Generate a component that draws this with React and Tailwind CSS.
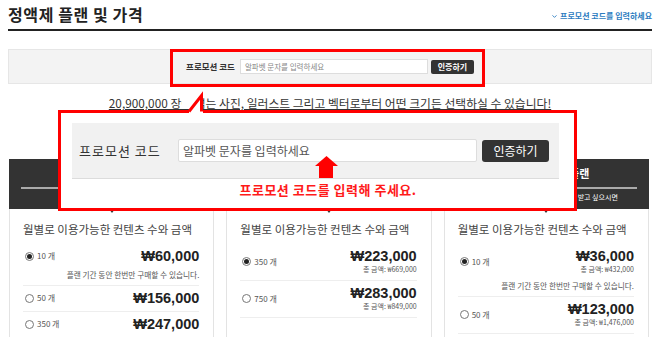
import { ChevronDown } from 'lucide-react';

const plans = [
  {
    title: '이미지 팩 플랜',
    sub: '필요할 때만 다운받고 싶으시면',
    rows: [
      { label: '10 개', price: '₩60,000', note: '플랜 기간 동안 한번만 구매할 수 있습니다.', checked: true },
      { label: '50 개', price: '₩156,000' },
      { label: '350 개', price: '₩247,000' },
    ],
  },
  {
    title: '월간 정기구독 플랜',
    sub: '매월 정기적으로 이미지를 다운로드 받고 싶으시면',
    rows: [
      { label: '350 개', price: '₩223,000', total: '총 금액: ₩669,000', checked: true },
      { label: '750 개', price: '₩283,000', total: '총 금액: ₩849,000' },
    ],
  },
  {
    title: '연간 정기구독 플랜',
    sub: '매월 정기적으로 이미지를 다운로드 받고 싶으시면',
    rows: [
      { label: '10 개', price: '₩36,000', total: '총 금액: ₩432,000', note: '플랜 기간 동안 한번만 구매할 수 있습니다.', checked: true },
      { label: '50 개', price: '₩123,000', total: '총 금액: ₩1,476,000' },
    ],
  },
];

function Radio({ checked }) {
  return (
    <span className="w-[9px] h-[9px] rounded-full border border-[#777] bg-white flex items-center justify-center">
      {checked && <span className="w-[5px] h-[5px] rounded-full bg-[#222]" />}
    </span>
  );
}

function PlanCard({ plan }) {
  return (
    <div className="flex flex-col">
      <div className="relative h-[50px] bg-[#333] px-[12px] pt-[6px]">
        <div className="text-center text-[11px] leading-[16px] font-bold text-white">{plan.title}</div>
        <div className="mt-[6px] h-[2px] bg-[#aaa]" />
        <div className="mt-[3px] text-center text-[7px] leading-[10px] text-white">{plan.sub}</div>
        <span className="absolute left-1/2 -bottom-[4px] -ml-[3px] w-0 h-0 border-x-[3px] border-x-transparent border-t-[4px] border-t-[#333]" />
      </div>
      <div className="flex-1 border-x border-[#e3e3e3] pl-[13px] pr-[14px] pt-[12px]">
        <div className="text-[11.5px] leading-[17px] text-[#444]">월별로 이용가능한 컨텐츠 수와 금액</div>
        <div className="mt-[6px]">
          {plan.rows.map((r) => (
            <div key={r.label} className="pt-[4px] pb-[5px] border-b border-[#eee]">
              <div className="flex items-center justify-between">
                <div className="flex items-center gap-[3px] pl-[2px]">
                  <Radio checked={r.checked} />
                  <span className="text-[8px] text-[#555]">{r.label}</span>
                </div>
                <div className="text-right">
                  <div className="font-['Liberation_Sans',sans-serif] text-[14.5px] leading-[16px] font-bold text-[#222]">{r.price}</div>
                  {r.total && <div className="text-[7px] leading-[11px] text-[#555]">{r.total}</div>}
                </div>
              </div>
              {r.note && <div className="mt-[5px] text-right text-[7.7px] leading-[11px] text-[#555]">{r.note}</div>}
            </div>
          ))}
        </div>
      </div>
    </div>
  );
}

export default function App() {
  return (
    <div className="relative w-[660px] h-[337px] overflow-hidden bg-white font-['Noto_Sans_CJK_KR',sans-serif] text-[#333]">
      <div className="mx-[8px] h-[31px] pt-[4px] border-b-2 border-[#222] flex justify-between items-start">
        <h1 className="text-[16px] leading-[20px] tracking-[0.6px] font-bold text-[#222]">정액제 플랜 및 가격</h1>
        <a className="mt-[7px] flex items-center gap-[2px] text-[8px] leading-[10px] font-bold text-[#2b7bc0]">
          <ChevronDown size={7} strokeWidth={3} />
          프로모션 코드를 입력하세요
        </a>
      </div>

      <div className="mx-[8px] mt-[18px] h-[35px] bg-[#f3f3f3] border border-[#e6e6e6] flex items-center justify-center">
        <span className="text-[8.5px] font-bold text-[#333]">프로모션 코드</span>
        <div className="ml-[5px] w-[188px] h-[15px] bg-white border border-[#ddd] flex items-center px-[4px] text-[7.5px] text-[#888]">
          알파벳 문자를 입력하세요
        </div>
        <button className="ml-[3px] w-[43px] h-[14px] bg-[#333] rounded-[2px] text-[8px] font-bold text-white leading-none">인증하기</button>
      </div>

      <p className="mt-[11px] text-center text-[11.8px] leading-[16px] text-[#333] underline underline-offset-[1px] decoration-[#333]">
        20,900,000 장이 넘는 사진, 일러스트 그리고 벡터로부터 어떤 크기든 선택하실 수 있습니다!
      </p>

      <div className="ml-[9px] mr-[11px] mt-[48px] grid grid-cols-3 gap-[12px]">
        {plans.map((p) => (
          <PlanCard key={p.title} plan={p} />
        ))}
      </div>

      {/* highlight around the small promo box */}
      <div className="absolute left-[170px] top-[49px] w-[315px] h-[38px] border-[3px] border-[#ff0000]" />

      {/* magnified callout */}
      <div className="absolute left-[58px] top-[110px] w-[519px] h-[101px] border-[3px] border-[#ff0000] bg-white pt-[10px] pl-[11px] pr-[15px]">
        <div className="h-[56px] bg-[#f1f1f1] border-b border-[#dcdcdc] flex items-center pl-[7px]">
          <span className="w-[99px] text-[13px] tracking-[1px] text-[#333]">프로모션 코드</span>
          <div className="w-[299px] h-[23px] bg-white border border-[#ddd] rounded-[2px] flex items-center px-[4px] text-[12px] text-[#555]">
            알파벳 문자를 입력하세요
          </div>
          <button className="ml-[5px] w-[67px] h-[22px] bg-[#333] rounded-[3px] text-[12px] text-white leading-none">인증하기</button>
        </div>
        <div className="mt-[2px] pl-[25px] text-center text-[13px] leading-[18px] tracking-[0.5px] font-bold text-[#ff1a1a]">
          프로모션 코드를 입력해 주세요.
        </div>
      </div>

      <svg className="absolute left-[315px] top-[156px]" width="23" height="22" viewBox="0 0 23 22">
        <polygon points="11.5,0 23,10 0,10" fill="#ff0000" />
        <rect x="4" y="10" width="14" height="12" fill="#ff0000" />
      </svg>

      <svg className="absolute left-[178px] top-[90px]" width="30" height="25" viewBox="0 0 30 25">
        <polygon points="4,4 25,4 25,23 11,23 11,19 4,19" fill="#fff" />
        <polyline points="11,21.5 23.5,5.5 23.5,21.5" fill="none" stroke="#ff0000" strokeWidth="3" strokeLinejoin="miter" />
      </svg>
    </div>
  );
}
